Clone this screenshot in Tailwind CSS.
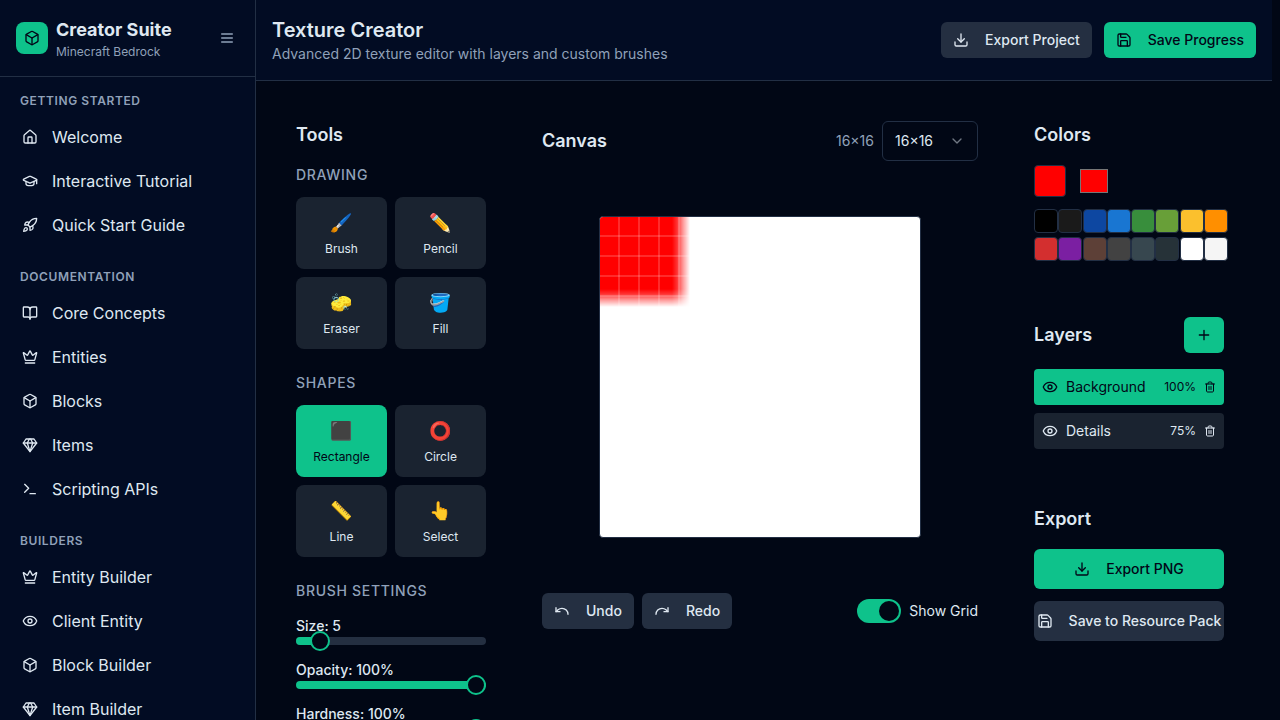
<!DOCTYPE html>
<html lang="en">
<head>
<meta charset="utf-8">
<title>Texture Creator</title>
<script src="https://cdn.jsdelivr.net/npm/@tailwindcss/browser@4"></script>
</head>
<body class="bg-[#010715] text-[#dfe8f1] font-['Inter',sans-serif]">
<svg class="hidden">
  <defs>
    <symbol id="box" viewBox="0 0 24 24"><path d="M21 8a2 2 0 0 0-1-1.73l-7-4a2 2 0 0 0-2 0l-7 4A2 2 0 0 0 3 8v8a2 2 0 0 0 1 1.73l7 4a2 2 0 0 0 2 0l7-4A2 2 0 0 0 21 16Z"/><path d="m3.3 7 8.7 5 8.7-5"/><path d="M12 22V12"/></symbol>
    <symbol id="menu" viewBox="0 0 24 24"><path d="M4 12h16M4 6h16M4 18h16"/></symbol>
    <symbol id="house" viewBox="0 0 24 24"><path d="M15 21v-8a1 1 0 0 0-1-1h-4a1 1 0 0 0-1 1v8"/><path d="M3 10a2 2 0 0 1 .709-1.528l7-5.999a2 2 0 0 1 2.582 0l7 5.999A2 2 0 0 1 21 10v9a2 2 0 0 1-2 2H5a2 2 0 0 1-2-2z"/></symbol>
    <symbol id="cap" viewBox="0 0 24 24"><path d="M21.42 10.922a1 1 0 0 0-.019-1.838L12.83 5.18a2 2 0 0 0-1.66 0L2.6 9.08a1 1 0 0 0 0 1.832l8.57 3.908a2 2 0 0 0 1.66 0z"/><path d="M22 10v6"/><path d="M6 12.5V16a6 3 0 0 0 12 0v-3.5"/></symbol>
    <symbol id="rocket" viewBox="0 0 24 24"><path d="M4.5 16.5c-1.5 1.26-2 5-2 5s3.74-.5 5-2c.71-.84.7-2.13-.09-2.91a2.18 2.18 0 0 0-2.91-.09z"/><path d="m12 15-3-3a22 22 0 0 1 2-3.95A12.88 12.88 0 0 1 22 2c0 2.72-.78 7.5-6 11a22.35 22.35 0 0 1-4 2z"/><path d="M9 12H4s.55-3.03 2-4c1.62-1.08 5 0 5 0"/><path d="M12 15v5s3.03-.55 4-2c1.08-1.62 0-5 0-5"/></symbol>
    <symbol id="book" viewBox="0 0 24 24"><path d="M12 7v14"/><path d="M3 18a1 1 0 0 1-1-1V4a1 1 0 0 1 1-1h5a4 4 0 0 1 4 4 4 4 0 0 1 4-4h5a1 1 0 0 1 1 1v13a1 1 0 0 1-1 1h-6a3 3 0 0 0-3 3 3 3 0 0 0-3-3z"/></symbol>
    <symbol id="crown" viewBox="0 0 24 24"><path d="M11.562 3.266a.5.5 0 0 1 .876 0L15.39 8.87a1 1 0 0 0 1.516.294L21.183 5.5a.5.5 0 0 1 .798.519l-2.834 10.246a1 1 0 0 1-.956.734H5.81a1 1 0 0 1-.957-.734L2.02 6.02a.5.5 0 0 1 .798-.519l4.276 3.664a1 1 0 0 0 1.516-.294z"/><path d="M5 21h14"/></symbol>
    <symbol id="gem" viewBox="0 0 24 24"><path d="M6 3h12l4 6-10 13L2 9Z"/><path d="M11 3 8 9l4 13 4-13-3-6"/><path d="M2 9h20"/></symbol>
    <symbol id="terminal" viewBox="0 0 24 24"><path d="m4 17 6-6-6-6"/><path d="M12 19h8"/></symbol>
    <symbol id="eye" viewBox="0 0 24 24"><path d="M2.062 12.348a1 1 0 0 1 0-.696 10.75 10.75 0 0 1 19.876 0 1 1 0 0 1 0 .696 10.75 10.75 0 0 1-19.876 0"/><circle cx="12" cy="12" r="3"/></symbol>
    <symbol id="download" viewBox="0 0 24 24"><path d="M21 15v4a2 2 0 0 1-2 2H5a2 2 0 0 1-2-2v-4"/><path d="m7 10 5 5 5-5"/><path d="M12 15V3"/></symbol>
    <symbol id="save" viewBox="0 0 24 24"><path d="M15.2 3a2 2 0 0 1 1.4.6l3.8 3.8a2 2 0 0 1 .6 1.4V19a2 2 0 0 1-2 2H5a2 2 0 0 1-2-2V5a2 2 0 0 1 2-2z"/><path d="M17 21v-7a1 1 0 0 0-1-1H8a1 1 0 0 0-1 1v7"/><path d="M7 3v4a1 1 0 0 0 1 1h7"/></symbol>
    <symbol id="undo" viewBox="0 0 24 24"><path d="M3 7v6h6"/><path d="M21 17a9 9 0 0 0-9-9 9 9 0 0 0-6 2.3L3 13"/></symbol>
    <symbol id="redo" viewBox="0 0 24 24"><path d="M21 7v6h-6"/><path d="M3 17a9 9 0 0 1 9-9 9 9 0 0 1 6 2.3l3 2.7"/></symbol>
    <symbol id="chevron" viewBox="0 0 24 24"><path d="m6 9 6 6 6-6"/></symbol>
    <symbol id="plus" viewBox="0 0 24 24"><path d="M5 12h14M12 5v14"/></symbol>
    <symbol id="trash" viewBox="0 0 24 24"><path d="M3 6h18"/><path d="M19 6v14c0 1-1 2-2 2H7c-1 0-2-1-2-2V6"/><path d="M8 6V4c0-1 1-2 2-2h4c1 0 2 1 2 2v2"/><path d="M10 11v6"/><path d="M14 11v6"/></symbol>
  </defs>
</svg>
<div class="flex h-[720px] w-[1280px] overflow-hidden [&_svg]:shrink-0 [&_svg]:fill-none [&_svg]:stroke-current [&_svg]:stroke-2 [&_svg]:[stroke-linecap:round] [&_svg]:[stroke-linejoin:round]">
  <aside class="flex w-64 shrink-0 flex-col border-r border-[#222f44] bg-[#020c23]">
    <div class="flex h-[77px] shrink-0 items-center border-b border-[#222f44] px-4">
      <div class="flex size-8 items-center justify-center rounded-lg bg-[#0ec28b] text-[#020617]"><svg class="size-4"><use href="#box"/></svg></div>
      <div class="ml-2 flex-1">
        <h2 class="text-lg leading-7 font-bold">Creator Suite</h2>
        <p class="text-xs leading-4 text-slate-400">Minecraft Bedrock</p>
      </div>
      <svg class="mr-1 size-4 text-slate-400"><use href="#menu"/></svg>
    </div>
    <nav class="flex flex-col gap-[22px] pt-4 pl-5">
      <section>
        <h3 class="mb-1.5 text-xs font-semibold tracking-wider text-slate-400">GETTING STARTED</h3>
        <a class="flex h-11 items-center gap-3.5 pl-0.5"><svg class="size-4"><use href="#house"/></svg>Welcome</a>
        <a class="flex h-11 items-center gap-3.5 pl-0.5"><svg class="size-4"><use href="#cap"/></svg>Interactive Tutorial</a>
        <a class="flex h-11 items-center gap-3.5 pl-0.5"><svg class="size-4"><use href="#rocket"/></svg>Quick Start Guide</a>
      </section>
      <section>
        <h3 class="mb-1.5 text-xs font-semibold tracking-wider text-slate-400">DOCUMENTATION</h3>
        <a class="flex h-11 items-center gap-3.5 pl-0.5"><svg class="size-4"><use href="#book"/></svg>Core Concepts</a>
        <a class="flex h-11 items-center gap-3.5 pl-0.5"><svg class="size-4"><use href="#crown"/></svg>Entities</a>
        <a class="flex h-11 items-center gap-3.5 pl-0.5"><svg class="size-4"><use href="#box"/></svg>Blocks</a>
        <a class="flex h-11 items-center gap-3.5 pl-0.5"><svg class="size-4"><use href="#gem"/></svg>Items</a>
        <a class="flex h-11 items-center gap-3.5 pl-0.5"><svg class="size-4"><use href="#terminal"/></svg>Scripting APIs</a>
      </section>
      <section>
        <h3 class="mb-1.5 text-xs font-semibold tracking-wider text-slate-400">BUILDERS</h3>
        <a class="flex h-11 items-center gap-3.5 pl-0.5"><svg class="size-4"><use href="#crown"/></svg>Entity Builder</a>
        <a class="flex h-11 items-center gap-3.5 pl-0.5"><svg class="size-4"><use href="#eye"/></svg>Client Entity</a>
        <a class="flex h-11 items-center gap-3.5 pl-0.5"><svg class="size-4"><use href="#box"/></svg>Block Builder</a>
        <a class="flex h-11 items-center gap-3.5 pl-0.5"><svg class="size-4"><use href="#gem"/></svg>Item Builder</a>
      </section>
    </nav>
  </aside>

  <div class="flex w-[1016px] shrink-0 flex-col">
    <header class="flex h-[81px] shrink-0 items-center justify-between border-b border-[#222f44] bg-[#020c23] px-4">
      <div>
        <h1 class="text-xl font-semibold">Texture Creator</h1>
        <p class="text-sm text-slate-400">Advanced 2D texture editor with layers and custom brushes</p>
      </div>
      <div class="flex gap-3 text-sm font-medium">
        <button class="flex h-9 items-center gap-4 rounded-md bg-[#242f41] px-3"><svg class="size-4"><use href="#download"/></svg>Export Project</button>
        <button class="flex h-9 items-center gap-4 rounded-md bg-[#0ec28b] px-3 text-[#020617]"><svg class="size-4"><use href="#save"/></svg>Save Progress</button>
      </div>
    </header>

    <main class="flex gap-14 px-10 pt-10">
      <div class="w-[190px] shrink-0">
        <h3 class="mb-4 text-lg leading-7 font-semibold">Tools</h3>
        <h4 class="mb-3 text-sm font-medium tracking-wider text-slate-400">DRAWING</h4>
        <div class="mb-6 grid grid-cols-2 gap-2 text-xs">
          <button class="flex h-[72px] flex-col items-center justify-center gap-1 rounded-lg bg-[#1a2330]"><span class="mr-0.5 text-lg leading-7">🖌️</span>Brush</button>
          <button class="flex h-[72px] flex-col items-center justify-center gap-1 rounded-lg bg-[#1a2330]"><span class="mr-0.5 text-lg leading-7">✏️</span>Pencil</button>
          <button class="flex h-[72px] flex-col items-center justify-center gap-1 rounded-lg bg-[#1a2330]"><span class="mr-0.5 text-lg leading-7">🧽</span>Eraser</button>
          <button class="flex h-[72px] flex-col items-center justify-center gap-1 rounded-lg bg-[#1a2330]"><span class="mr-0.5 text-lg leading-7">🪣</span>Fill</button>
        </div>
        <h4 class="mb-3 text-sm font-medium tracking-wider text-slate-400">SHAPES</h4>
        <div class="mb-6 grid grid-cols-2 gap-2 text-xs">
          <button class="flex h-[72px] flex-col items-center justify-center gap-1 rounded-lg bg-[#0ec28b] text-[#020617]"><span class="mr-0.5 text-lg leading-7">⬛</span>Rectangle</button>
          <button class="flex h-[72px] flex-col items-center justify-center gap-1 rounded-lg bg-[#1a2330]"><span class="mr-0.5 text-lg leading-7">⭕</span>Circle</button>
          <button class="flex h-[72px] flex-col items-center justify-center gap-1 rounded-lg bg-[#1a2330]"><span class="mr-0.5 text-lg leading-7">📏</span>Line</button>
          <button class="flex h-[72px] flex-col items-center justify-center gap-1 rounded-lg bg-[#1a2330]"><span class="mr-0.5 text-lg leading-7">👆</span>Select</button>
        </div>
        <h4 class="mb-[15px] text-sm font-medium tracking-wider text-slate-400">BRUSH SETTINGS</h4>
        <div class="flex flex-col gap-[15px] text-sm font-medium">
          <div>
            <div class="mb-px">Size: 5</div>
            <div class="relative h-2 rounded-full bg-[#242f41]"><div class="h-2 w-6 rounded-full bg-[#0ec28b]"></div><div class="absolute -top-1.5 left-3.5 size-5 rounded-full border-2 border-[#0ec28b] bg-[#010715]"></div></div>
          </div>
          <div>
            <div class="mb-px">Opacity: 100%</div>
            <div class="relative h-2 rounded-full bg-[#0ec28b]"><div class="absolute -top-1.5 right-0 size-5 rounded-full border-2 border-[#0ec28b] bg-[#010715]"></div></div>
          </div>
          <div>
            <div class="mb-px">Hardness: 100%</div>
            <div class="relative h-2 rounded-full bg-[#0ec28b]"><div class="absolute -top-1.5 right-0 size-5 rounded-full border-2 border-[#0ec28b] bg-[#010715]"></div></div>
          </div>
        </div>
      </div>

      <div class="w-[436px] shrink-0">
        <div class="flex h-10 items-center">
          <h3 class="flex-1 text-lg font-semibold">Canvas</h3>
          <span class="mr-2 text-sm text-slate-400">16×16</span>
          <div class="flex h-10 w-24 items-center justify-between rounded-md border border-[#222f44] px-3 text-sm">16×16<svg class="size-4 opacity-50"><use href="#chevron"/></svg></div>
        </div>
        <div class="mt-[55px] flex justify-center">
          <div class="relative size-[322px] overflow-hidden rounded border border-[#222f44] bg-white">
            <div class="size-[92px] bg-[#ff0000] [mask-composite:intersect] [mask-image:linear-gradient(to_right,#000_72px,#000000cc_77px,#00000066_83px,transparent_90px),linear-gradient(to_bottom,#000_72px,#000000cc_77px,#00000066_83px,transparent_90px)]"></div>
            <div class="absolute -inset-px bg-[linear-gradient(to_right,#ffffff2b_1px,transparent_1px,transparent_19px,#ffffff2b_19px),linear-gradient(to_bottom,#ffffff2b_1px,transparent_1px,transparent_19px,#ffffff2b_19px)] bg-[size:20px_20px]"></div>
          </div>
        </div>
        <div class="mt-[55px] flex items-center gap-2 text-sm">
          <button class="flex h-9 items-center gap-4 rounded-md bg-[#242f41] px-3 font-medium"><svg class="size-4"><use href="#undo"/></svg>Undo</button>
          <button class="flex h-9 items-center gap-4 rounded-md bg-[#242f41] px-3 font-medium"><svg class="size-4"><use href="#redo"/></svg>Redo</button>
          <div class="ml-auto flex h-6 w-11 items-center justify-end rounded-full bg-[#0ec28b] p-0.5"><div class="size-5 rounded-full bg-[#010715]"></div></div>
          <span>Show Grid</span>
        </div>
      </div>

      <div class="w-[190px] shrink-0">
        <h3 class="mb-4 text-lg leading-7 font-semibold">Colors</h3>
        <div class="mb-3 flex items-center gap-3.5">
          <div class="size-8 rounded border border-[#222f44] bg-[#ff0000]"></div>
          <div class="h-6 w-7 border border-[#767676] bg-[#ff0000]"></div>
        </div>
        <div class="grid grid-cols-8 gap-1 [&>*]:size-6 [&>*]:rounded [&>*]:border [&>*]:border-[#222f44]">
          <i class="bg-[#000000]"></i><i class="bg-[#1a1a1a]"></i><i class="bg-[#0d47a1]"></i><i class="bg-[#1976d2]"></i><i class="bg-[#388e3c]"></i><i class="bg-[#689f38]"></i><i class="bg-[#fbc02d]"></i><i class="bg-[#ff8f00]"></i>
          <i class="bg-[#d32f2f]"></i><i class="bg-[#7b1fa2]"></i><i class="bg-[#5d4037]"></i><i class="bg-[#424242]"></i><i class="bg-[#37474f]"></i><i class="bg-[#263238]"></i><i class="bg-[#ffffff]"></i><i class="bg-[#f5f5f5]"></i>
        </div>
        <div class="mt-14 mb-4 flex h-9 items-center justify-between">
          <h3 class="text-lg font-semibold">Layers</h3>
          <button class="flex h-9 w-10 items-center justify-center rounded-md bg-[#0ec28b] text-[#020617]"><svg class="size-4"><use href="#plus"/></svg></button>
        </div>
        <div class="mb-2 flex h-9 items-center gap-2 rounded bg-[#0ec28b] px-2 text-sm text-[#020617]"><svg class="size-4"><use href="#eye"/></svg><span class="flex-1">Background</span><span class="text-xs">100%</span><svg class="size-3"><use href="#trash"/></svg></div>
        <div class="flex h-9 items-center gap-2 rounded bg-[#1a2330] px-2 text-sm"><svg class="size-4"><use href="#eye"/></svg><span class="flex-1">Details</span><span class="text-xs">75%</span><svg class="size-3"><use href="#trash"/></svg></div>
        <h3 class="mt-14 mb-4 text-lg leading-7 font-semibold">Export</h3>
        <div class="flex flex-col gap-3 text-sm font-medium whitespace-nowrap">
          <button class="flex h-10 items-center justify-center gap-4 rounded-md bg-[#0ec28b] text-[#020617]"><svg class="size-4"><use href="#download"/></svg>Export PNG</button>
          <button class="flex h-10 items-center justify-center gap-4 rounded-md bg-[#242f41]"><svg class="size-4"><use href="#save"/></svg>Save to Resource Pack</button>
        </div>
      </div>
    </main>
  </div>
</div>
</body>
</html>
